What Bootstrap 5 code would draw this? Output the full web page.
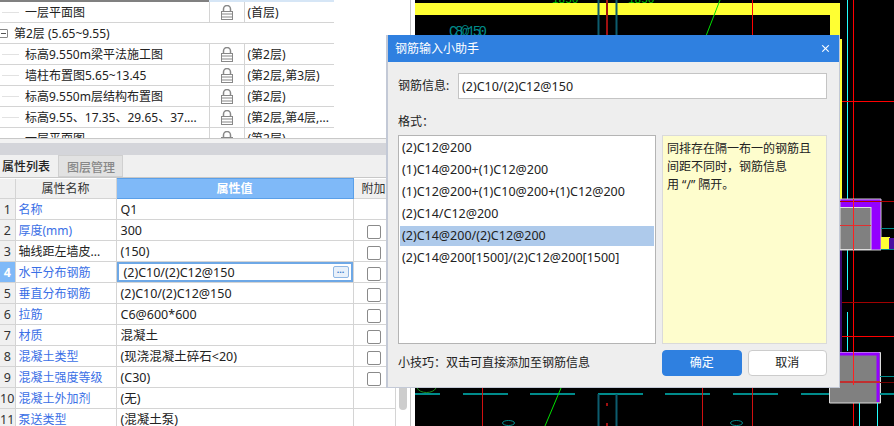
<!DOCTYPE html>
<html lang="zh-CN">
<head>
  <meta charset="UTF-8">
  <meta name="viewport" content="width=device-width, initial-scale=1.0">
  <title>钢筋输入小助手</title>
  <link href="https://cdn.jsdelivr.net/npm/bootstrap@5.3.0/dist/css/bootstrap.min.css" rel="stylesheet">
  <style>
    html, body { height: 426px; overflow: hidden; }
    body {
      font-family: "Noto Sans", "Noto Sans CJK SC", sans-serif;
      font-size: 12px;
      color: #222;
      background: #fff;
    }
    .app-page { position: relative; width: 894px; height: 426px; overflow: hidden; }
    .latin-text { font-size: 12.5px; }

    /* left side */
    .side-panel { width: 415px; height: 426px; flex: none; background: #fff; }
    .side-inner { width: 411px; height: 426px; border-right: 1px solid #c4c4c4; }
    .tree-wrap { height: 139px; overflow: hidden; border-bottom: 1px solid #c8c8c8; }
    .tree-top { height: 2px; width: 334px; background: linear-gradient(90deg, #808080 0 209px, #d6e6f6 209px); }
    .tree-table { width: 334px; table-layout: fixed; border-collapse: collapse; }
    .tree-table td { height: 21px; padding: 1px 0 0; border-bottom: 1px solid #d4d4d4; white-space: nowrap; overflow: hidden; line-height: 19px; }
    .tree-table td + td { border-left: 1px solid #d4d4d4; }
    .tree-table tr:first-child td { height: 20px; }
    .tree-name { display: flex; align-items: center; }
    .tree-name::before { content: ""; width: 17px; height: 1px; margin-left: 2px; margin-right: 6px; background: #e2e2e2; flex: none; }
    .group-name { display: flex; align-items: center; gap: 6px; }
    .minus-box { width: 9px; height: 9px; margin-left: -1px; border: 1px solid #888; border-radius: 1px; position: relative; flex: none; }
    .minus-box::after { content: ""; position: absolute; left: 1px; right: 1px; top: 3px; height: 1px; background: #555; }
    .tree-table td.floor-cell { padding-left: 3px; }
    .tree-table td.lock-cell { text-align: center; padding-top: 0; }
    .lock-cell svg { display: inline-block; vertical-align: -3px; }
    .splitter { height: 16px; background: linear-gradient(#f2f2f2 0 4px, #d4d5da 4px); }

    .tab-strip { height: 23px; width: 386px; background: #f0f0f0; border-bottom: 1px solid #c8c8c8; }
    .tab-active, .tab-idle { height: 22px; line-height: 23px; padding: 0 2px; font-weight: 500; }
    .tab-active { width: 58px; background: #f0f0f0; color: #222; }
    .tab-idle { width: 65px; padding-left: 8px; background: #e2e2e2; color: #888; border: 1px solid #d0d0d0; }

    .prop-wrap { width: 395px; }
    .prop-table { width: 395px; table-layout: fixed; border-collapse: collapse; }
    .prop-table th, .prop-table td { height: 21px; padding: 1px 0 0 3px; border: 1px solid #d4d4d4; border-top-width: 0; border-left-width: 0; white-space: nowrap; overflow: hidden; line-height: 19px; font-weight: 400; }
    .prop-table th { text-align: center; background: #f0f0f0; color: #333; padding: 0; height: 20px; }
    .prop-table th.value-head { background: #7fb9f8; color: #fff; font-weight: 600; border: 1px solid #5a9fe8; }
    .prop-table td.value-cell { padding-left: 4px; }
    .prop-table td.row-num { background: #f0f0f0; padding: 1px 0 0; text-align: center; color: #333; }
    .prop-table td.row-num.is-current { background: #7fb9f8; color: #fff; font-weight: 700; }
    .attr-link { color: #3a6fe6; }
    .prop-table td.check-cell { padding: 0; }
    .check-cell .form-check-input { display: block; width: 14px; height: 14px; margin: 3px 0 0 13px; border: 1px solid #8a8a8a; border-radius: 2px; float: none; }
    .edit-box { display: flex; align-items: center; justify-content: space-between; height: 20px; padding: 0 2px 0 5px; border: 2px solid #6ea8e6; }
    .more-btn { width: 16px; height: 12px; border: 1px solid #8fb7e4; border-radius: 2px; background: #e8f1fb; color: #3a78c8; font-size: 9px; line-height: 6px; text-align: center; font-weight: 700; }
    .side-scroll { width: 8px; height: 132px; margin: 100px 3px 0 4px; background: #cdcdcd; border-radius: 4px; flex: none; }

    /* drawing */
    .cad-view { flex: 1 1 auto; height: 426px; background: #000; }
    .cad-view svg { display: block; }

    /* dialog */
    .rebar-dialog { position: absolute; left: 386px; top: 35px; width: 454px; height: 353px; background: #eeeeee; border: 1px solid #c3c9d6; border-top: 0; border-left-width: 2px; border-radius: 0; font-size: 12px; }
    .dlg-head { height: 27px; background: #2f80e0; color: #fff; padding: 0 9px 0 7px; border: 0; border-radius: 0 !important; }
    .dlg-head .btn-close { width: 9px; height: 9px; padding: 0; opacity: 1; background-size: 9px; margin-right: 0; }
    .dlg-body { padding: 11px 12px 11px 10px; flex: 1 1 auto; min-height: 0; }
    .info-input { height: 26px; width: 370px; padding: 0 3px; border: 1px solid #c4c4c4; border-radius: 0; font-size: 12.5px; color: #222; }
    .info-label { width: 60px; flex: none; }
    .format-title { margin: 13px 0 4px; height: 19px; line-height: 19px; }
    .format-area { gap: 6px; height: 209px; }
    .format-list { width: 258px; height: 209px; background: #fff; border: 1px solid #b4b4b4; border-radius: 0; padding: 1px 1px 0; flex: none; }
    .format-list .list-group-item { height: 22px; padding: 0 2px; line-height: 22px; border: 0; background: transparent; color: #222; font-size: 12.5px; white-space: nowrap; border-radius: 0; }
    .format-list .list-group-item.active { height: 20px; line-height: 20px; margin: 1px 0; background: #aecaeb; color: #222; }
    .hint-box { width: 165px; height: 209px; background: #fefdcd; border: 1px solid #dadada; padding: 4px; line-height: 18px; flex: none; }
    .tips-row { margin-top: 6px; height: 26px; }
    .tips-text { width: 264px; flex: none; }
    .ok-btn, .cancel-btn { width: 80px; height: 26px; padding: 0; font-size: 12px; border-radius: 4px; line-height: 24px; }
    .ok-btn { background: #2f80e0; border-color: #2f80e0; color: #fff; margin-right: 6px; }
    .cancel-btn { background: #fff; border-color: #cccccc; color: #222; }
  </style>
</head>
<body>

<div class="app-page d-flex">
  <div class="side-panel">
    <div class="side-inner">
      <div class="tree-wrap">
        <div class="tree-top"></div>
        <table class="tree-table">
          <colgroup><col style="width:209px"><col style="width:35px"><col style="width:90px"></colgroup>
          <tbody id="tree-body"></tbody>
        </table>
      </div>
      <div class="splitter"></div>

      <div class="tab-strip d-flex">
        <div class="tab-active">属性列表</div>
        <div class="tab-idle">图层管理</div>
      </div>

      <div class="d-flex">
        <div class="prop-wrap">
          <table class="prop-table">
            <colgroup><col style="width:15px"><col style="width:101px"><col style="width:237px"><col style="width:42px"></colgroup>
            <thead>
              <tr><th></th><th>属性名称</th><th class="value-head">属性值</th><th style="text-align:left;padding-left:8px">附加</th></tr>
            </thead>
            <tbody id="prop-body"></tbody>
          </table>
        </div>
        <div class="side-scroll align-self-start"></div>
      </div>
    </div>
  </div>

  <div class="cad-view">
    <svg width="479" height="426" viewBox="415 0 479 426" xmlns="http://www.w3.org/2000/svg" fill="none">
      <rect x="415" y="0" width="479" height="426" fill="#000"/>
      <!-- top beam -->
      <rect x="415" y="3" width="419" height="12" fill="#ffff33"/>
      <rect x="830" y="3" width="10" height="36" fill="#ffff33"/>
      <text x="552" y="3" fill="#00c000" font-size="11" font-family="Liberation Mono, monospace">1850</text>
      <text x="628" y="3" fill="#00c000" font-size="11" font-family="Liberation Mono, monospace">1850</text>
      <text x="449" y="36" fill="#008b8b" font-size="14" font-family="Liberation Mono, monospace" textLength="38">C8@150</text>
      <path d="M598.500 0V36M616.500 0V36" stroke="#0d5c6e" stroke-width="2"/>
      <path d="M607 0V36" stroke="#a01010" stroke-width="2"/>
      <path d="M720 0L706 36" stroke="#00e000"/>
      <path d="M752.500 0V36" stroke="#ff0000"/>
      <path d="M847.500 0V290M847.500 312V351" stroke="#22ffff"/>
      <path d="M853.500 0V385M853.500 403V426" stroke="#ff0000"/>
      <path d="M840 101.500H894M840 336.500H894" stroke="#ff0000"/>
      <path d="M840 302.500H894" stroke="#a00000"/>
      <rect x="840" y="39" width="2" height="160" fill="#ffff33"/>
      <rect x="840" y="250" width="2" height="102" fill="#3a0a70"/>
      <!-- upper column -->
      <path d="M840 199H881V250H840Z" fill="#9400ff" stroke="#cccccc"/>
      <rect x="840" y="207.500" width="31" height="42" fill="#808080" stroke="#dddddd"/>
      <path d="M840 201.500H894" stroke="#b00000"/>
      <path d="M840 225.500H871" stroke="#e03030"/>
      <path d="M853.500 199V250" stroke="#ff2020"/>
      <rect x="881" y="237" width="9" height="13" fill="#ffff33"/>
      <rect x="889" y="238" width="5" height="11" fill="#4a10a0"/>
      <path d="M881 228.500H894M881 249.500H894" stroke="#008b8b"/>
      <!-- lower column -->
      <path d="M829.500 352.500H880.500V403H829.500Z" fill="#808080" stroke="#dddddd"/>
      <path d="M840 354H878V402" stroke="#9400ff" stroke-width="3"/>
      <path d="M829 382H880" stroke="#c03030" stroke-width="2"/>
      <path d="M853.500 352V385" stroke="#ff2020"/>
      <path d="M880 376.500H894" stroke="#008b8b"/>
      <path d="M880 394H894" stroke="#008b8b" stroke-width="2"/>
      <path d="M880 382.500H894" stroke="#700000"/>
      <path d="M859.500 403V426M877.500 403V426" stroke="#22ffff"/>
      <!-- bottom strip -->
      <path d="M415 394H440M463 394H508M530 394H575M598 394H643M665 394H710M733 394H778M801 394H829" stroke="#008b8b" stroke-width="2"/>
      <path d="M482.500 388V426M702.500 388V426M752.500 388V426" stroke="#d01010"/>
      <path d="M561 388L545 426" stroke="#00e000"/>
      <path d="M598.500 394V426M616.500 394V426" stroke="#0d5c6e" stroke-width="2"/>
      <path d="M607 403V406M607 423V426" stroke="#a01010" stroke-width="2"/>
      <ellipse cx="508.500" cy="423" rx="6" ry="2.500" stroke="#008b8b"/>
      <ellipse cx="736.500" cy="423" rx="6" ry="2.500" stroke="#008b8b"/>
      <path d="M417 388C420 394 433 394 436 388" stroke="#1c8a1c"/>
    </svg>
  </div>

  <div class="rebar-dialog card">
    <div class="dlg-head card-header d-flex align-items-center justify-content-between">
      <span>钢筋输入小助手</span>
      <button type="button" class="btn-close btn-close-white" aria-label="Close"></button>
    </div>
    <div class="dlg-body d-flex flex-column">
      <div class="d-flex align-items-center">
        <label class="info-label">钢筋信息:</label>
        <input class="form-control info-input" type="text" value="(2)C10/(2)C12@150">
      </div>
      <div class="format-title">格式：</div>
      <div class="format-area d-flex">
        <div class="format-list list-group" id="format-list"></div>
        <div class="hint-box">同排存在隔一布一的钢筋且<br>间距不同时，钢筋信息<br>用 “/” 隔开。</div>
      </div>
      <div class="tips-row d-flex align-items-center">
        <div class="tips-text">小技巧：双击可直接添加至钢筋信息</div>
        <button type="button" class="btn ok-btn">确定</button>
        <button type="button" class="btn cancel-btn">取消</button>
      </div>
    </div>
  </div>
</div>

<script>
  const lockIcon = '<svg width="12" height="15" viewBox="0 0 12 15" fill="none"><path d="M2.500 7V4a3.500 3.500 0 0 1 7 0V7" stroke="#888" stroke-width="1.500"/><rect x="0.500" y="6.500" width="11" height="8" fill="#fff" stroke="#888"/><path d="M1 9H11M1 12H11" stroke="#888" stroke-width="1.200"/></svg>';

  const treeRows = [
    { name: '一层平面图', floor: '(首层)' },
    { group: '第2层 (5.65~9.55)' },
    { name: '标高9.550m梁平法施工图', floor: '(第2层)' },
    { name: '墙柱布置图5.65~13.45', floor: '(第2层,第3层)' },
    { name: '标高9.550m层结构布置图', floor: '(第2层)' },
    { name: '标高9.55、17.35、29.65、37....', floor: '(第2层,第4层,...' },
    { name: '一层平面图', floor: '(第2层)' }
  ];

  document.getElementById('tree-body').innerHTML = treeRows.map(row => {
    if (row.group) {
      return `<tr><td colspan="3"><div class="group-name"><span class="minus-box"></span>${row.group}</div></td></tr>`;
    }
    return `<tr><td><div class="tree-name">${row.name}</div></td><td class="lock-cell">${lockIcon}</td><td class="floor-cell">${row.floor}</td></tr>`;
  }).join('');

  const props = [
    ['名称', 'Q1', true, false],
    ['厚度(mm)', '300', true, true],
    ['轴线距左墙皮...', '(150)', false, true],
    ['水平分布钢筋', '(2)C10/(2)C12@150', true, true],
    ['垂直分布钢筋', '(2)C10/(2)C12@150', true, true],
    ['拉筋', 'C6@600*600', true, true],
    ['材质', '混凝土', true, true],
    ['混凝土类型', '(现浇混凝土碎石&lt;20)', true, true],
    ['混凝土强度等级', '(C30)', true, true],
    ['混凝土外加剂', '(无)', true, false],
    ['泵送类型', '(混凝土泵)', true, false]
  ];

  document.getElementById('prop-body').innerHTML = props.map((p, i) => {
    const current = i === 3;
    const value = current
      ? `<div class="edit-box"><span class="latin-text">${p[1]}</span><span class="more-btn">...</span></div>`
      : `<span class="latin-text">${p[1]}</span>`;
    const check = p[3] ? '<input class="form-check-input" type="checkbox">' : '';
    return `<tr>
      <td class="row-num${current ? ' is-current' : ''} latin-text">${i + 1}</td>
      <td class="${p[2] ? 'attr-link' : ''}">${p[0]}</td>
      <td class="value-cell"${current ? ' style="padding:0"' : ''}>${value}</td>
      <td class="check-cell">${check}</td>
    </tr>`;
  }).join('');

  const formats = [
    '(2)C12@200',
    '(1)C14@200+(1)C12@200',
    '(1)C12@200+(1)C10@200+(1)C12@200',
    '(2)C14/C12@200',
    '(2)C14@200/(2)C12@200',
    '(2)C14@200[1500]/(2)C12@200[1500]'
  ];

  document.getElementById('format-list').innerHTML = formats.map((f, i) =>
    `<div class="list-group-item${i === 4 ? ' active' : ''}">${f}</div>`
  ).join('');
</script>
</body>
</html>
